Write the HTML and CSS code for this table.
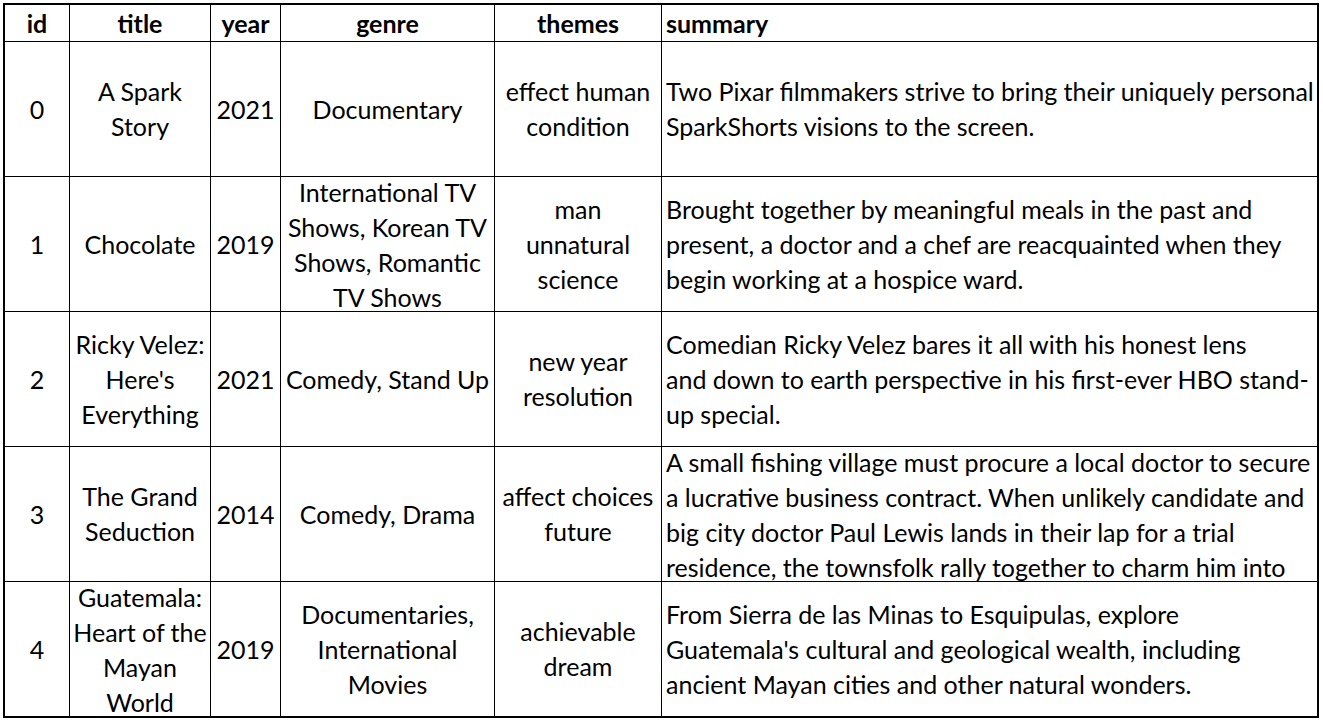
FILE: index.html
```html
<!DOCTYPE html>
<html lang="en">
<head>
<meta charset="utf-8">
<title>Titles</title>
<link rel="stylesheet" href="styles.css">
</head>
<body>
<div class="sheet">
  <div class="grid">
    <div class="cell head">id</div>
    <div class="cell head">title</div>
    <div class="cell head">year</div>
    <div class="cell head">genre</div>
    <div class="cell head">themes</div>
    <div class="cell head left">summary</div>

    <div class="cell">0</div>
    <div class="cell">A Spark<br>Story</div>
    <div class="cell">2021</div>
    <div class="cell">Documentary</div>
    <div class="cell">effect human<br>condition</div>
    <div class="cell left">Two Pixar filmmakers strive to bring their uniquely personal<br>SparkShorts visions to the screen.</div>

    <div class="cell">1</div>
    <div class="cell">Chocolate</div>
    <div class="cell">2019</div>
    <div class="cell top"><span class="txt">International TV<br>Shows, Korean TV<br>Shows, Romantic<br>TV Shows</span></div>
    <div class="cell">man<br>unnatural<br>science</div>
    <div class="cell left">Brought together by meaningful meals in the past and<br>present, a doctor and a chef are reacquainted when they<br>begin working at a hospice ward.</div>

    <div class="cell">2</div>
    <div class="cell">Ricky Velez:<br>Here's<br>Everything</div>
    <div class="cell">2021</div>
    <div class="cell">Comedy, Stand Up</div>
    <div class="cell">new year<br>resolution</div>
    <div class="cell left">Comedian Ricky Velez bares it all with his honest lens<br>and down to earth perspective in his first-ever HBO stand-<br>up special.</div>

    <div class="cell">3</div>
    <div class="cell">The Grand<br>Seduction</div>
    <div class="cell">2014</div>
    <div class="cell">Comedy, Drama</div>
    <div class="cell">affect choices<br>future</div>
    <div class="cell left top"><span class="txt">A small fishing village must procure a local doctor to secure<br>a lucrative business contract. When unlikely candidate and<br>big city doctor Paul Lewis lands in their lap for a trial<br>residence, the townsfolk rally together to charm him into</span></div>

    <div class="cell">4</div>
    <div class="cell top"><span class="txt">Guatemala:<br>Heart of the<br>Mayan<br>World</span></div>
    <div class="cell">2019</div>
    <div class="cell">Documentaries,<br>International<br>Movies</div>
    <div class="cell">achievable<br>dream</div>
    <div class="cell left">From Sierra de las Minas to Esquipulas, explore<br>Guatemala's cultural and geological wealth, including<br>ancient Mayan cities and other natural wonders.</div>
  </div>
</div>
</body>
</html>
```

FILE: styles.css
```css
html, body {
  margin: 0;
  padding: 0;
  background: #ffffff;
}

body {
  font-family: "Lato", "Liberation Sans", sans-serif;
  color: #000000;
}

.sheet {
  padding: 3px 0 0 3px;
}

.grid {
  display: grid;
  grid-template-columns: 64px 140px 69px 213px 166px 655px;
  grid-template-rows: 36px repeat(5, 134px);
  gap: 1px;
  background: #000000;
  border: 2px solid #000000;
  width: max-content;
}

.cell {
  background: #ffffff;
  display: flex;
  align-items: center;
  justify-content: center;
  text-align: center;
  font-size: 25px;
  line-height: 35px;
  overflow: hidden;
  white-space: nowrap;
}

.head {
  font-weight: bold;
}

.left {
  justify-content: flex-start;
  text-align: left;
  padding-left: 4px;
}

.top {
  align-items: flex-start;
}

.txt {
  display: block;
  margin-top: -2px;
}
```
